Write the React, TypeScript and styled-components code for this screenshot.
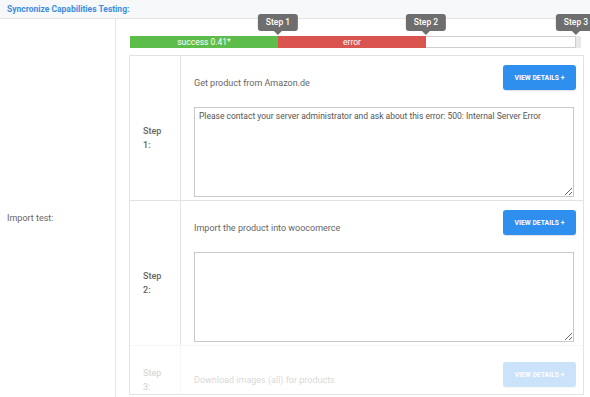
import React from "react";
import styled, { createGlobalStyle } from "styled-components";

const GlobalStyle = createGlobalStyle`
  html, body {
    margin: 0;
    padding: 0;
    overflow: hidden;
    background: #fff;
    font-family: Roboto, "Liberation Sans", Arial, sans-serif;
  }
`;

const Page = styled.div`
  width: 590px;
`;

const Header = styled.div`
  height: 18px;
  display: flex;
  align-items: center;
  padding-left: 7px;
  background: #f7f8f9;
  border-bottom: 1px solid #e4e4e4;
`;

const Title = styled.span`
  color: #3b8ede;
  font-size: 8.5px;
  font-weight: 700;
`;

const Body = styled.div`
  display: flex;
  height: 378px;
`;

const LabelColumn = styled.div`
  width: 116px;
  flex-shrink: 0;
  border-right: 1px solid #e6e6e6;
  display: flex;
  align-items: center;
  padding: 20px 0 0 7px;
  box-sizing: border-box;
  color: #666;
  font-size: 9px;
`;

const ContentColumn = styled.div`
  flex: 1;
  padding: 17px 0 0 13px;
`;

const Bar = styled.div`
  position: relative;
  display: flex;
  width: 451px;
  height: 12px;
  margin-left: 1px;
  background: #e8e8e8;
`;

const Segment = styled.div<{ $color: string; $w: number }>`
  width: ${(p) => p.$w}px;
  height: 100%;
  box-sizing: border-box;
  background: ${(p) => p.$color};
  color: #fff;
  font-size: 8.5px;
  line-height: 12px;
  text-align: center;
  ${(p) => (p.$color === "#fff" ? "border: 1px solid #cfcfcf; border-left: none;" : "")}
`;

const Tip = styled.div<{ $at: number }>`
  position: absolute;
  left: ${(p) => p.$at}px;
  bottom: calc(100% + 5px);
  transform: translateX(-50%);
  background: #6e6e6e;
  color: #fff;
  font-size: 8.5px;
  font-weight: 500;
  padding: 0 8px;
  height: 17px;
  line-height: 17px;
  border-radius: 3px;
  white-space: nowrap;

  &::after {
    content: "";
    position: absolute;
    left: 50%;
    top: 100%;
    margin-left: -4px;
    border: 4px solid transparent;
    border-top-color: #6e6e6e;
    border-bottom: none;
  }
`;

const Table = styled.div`
  margin-top: 7px;
  width: 455px;
  border: 1px solid #e3e3e3;
  box-sizing: border-box;
`;

const Row = styled.div<{ $faded?: boolean }>`
  display: flex;
  opacity: ${(p) => (p.$faded ? 0.25 : 1)};
  & + & {
    border-top: 1px solid #e3e3e3;
  }
`;

const StepCell = styled.div`
  width: 51px;
  flex-shrink: 0;
  border-right: 1px solid #e3e3e3;
  display: flex;
  align-items: center;
  padding: 20px 0 0 13px;
  box-sizing: border-box;
  color: #666;
  font-size: 9px;
  font-weight: 500;
  line-height: 14px;
`;

const MainCell = styled.div<{ $top: number }>`
  flex: 1;
  padding: ${(p) => p.$top}px 7px 3px 13px;
`;

const TopLine = styled.div`
  display: flex;
  justify-content: space-between;
  align-items: flex-end;
`;

const Caption = styled.span`
  color: #666;
  font-size: 9px;
  margin-bottom: 3px;
`;

const DetailsButton = styled.button`
  width: 73px;
  height: 25px;
  border: none;
  border-radius: 3px;
  background: #2f8fef;
  color: #fff;
  font-family: inherit;
  font-size: 6.8px;
  font-weight: 700;
  padding: 0;
  margin-bottom: 1px;
  box-shadow: 0 1px 1px rgba(0, 0, 0, 0.12);
`;

const Output = styled.textarea`
  display: block;
  width: 380px;
  height: 90px;
  margin-top: 16px;
  box-sizing: border-box;
  border: 1px solid #c9c9c9;
  padding: 3px 4px;
  font-family: inherit;
  font-size: 8.5px;
  color: #555;
  resize: vertical;
`;

const steps = [
  {
    n: 1,
    caption: "Get product from Amazon.de",
    output: "Please contact your server administrator and ask about this error: 500: Internal Server Error",
  },
  { n: 2, caption: "Import the product into woocomerce", output: "" },
];

export default function App() {
  return (
    <Page>
      <GlobalStyle />
      <Header>
        <Title>Syncronize Capabilities Testing:</Title>
      </Header>
      <Body>
        <LabelColumn>Import test:</LabelColumn>
        <ContentColumn>
          <Bar>
            <Segment $color="#5cbd4a" $w={148}>success 0.41*</Segment>
            <Segment $color="#d9534f" $w={148}>error</Segment>
            <Segment $color="#fff" $w={150} />
            <Tip $at={148}>Step 1</Tip>
            <Tip $at={296}>Step 2</Tip>
            <Tip $at={446}>Step 3</Tip>
          </Bar>
          <Table>
            {steps.map((s) => (
              <Row key={s.n}>
                <StepCell>
                  Step
                  <br />
                  {s.n}:
                </StepCell>
                <MainCell $top={9}>
                  <TopLine>
                    <Caption>{s.caption}</Caption>
                    <DetailsButton>VIEW DETAILS +</DetailsButton>
                  </TopLine>
                  <Output readOnly value={s.output} />
                </MainCell>
              </Row>
            ))}
            <Row $faded>
              <StepCell>
                Step
                <br />
                3:
              </StepCell>
              <MainCell $top={16}>
                <TopLine>
                  <Caption>Download images (all) for products</Caption>
                  <DetailsButton>VIEW DETAILS +</DetailsButton>
                </TopLine>
              </MainCell>
            </Row>
          </Table>
        </ContentColumn>
      </Body>
    </Page>
  );
}
